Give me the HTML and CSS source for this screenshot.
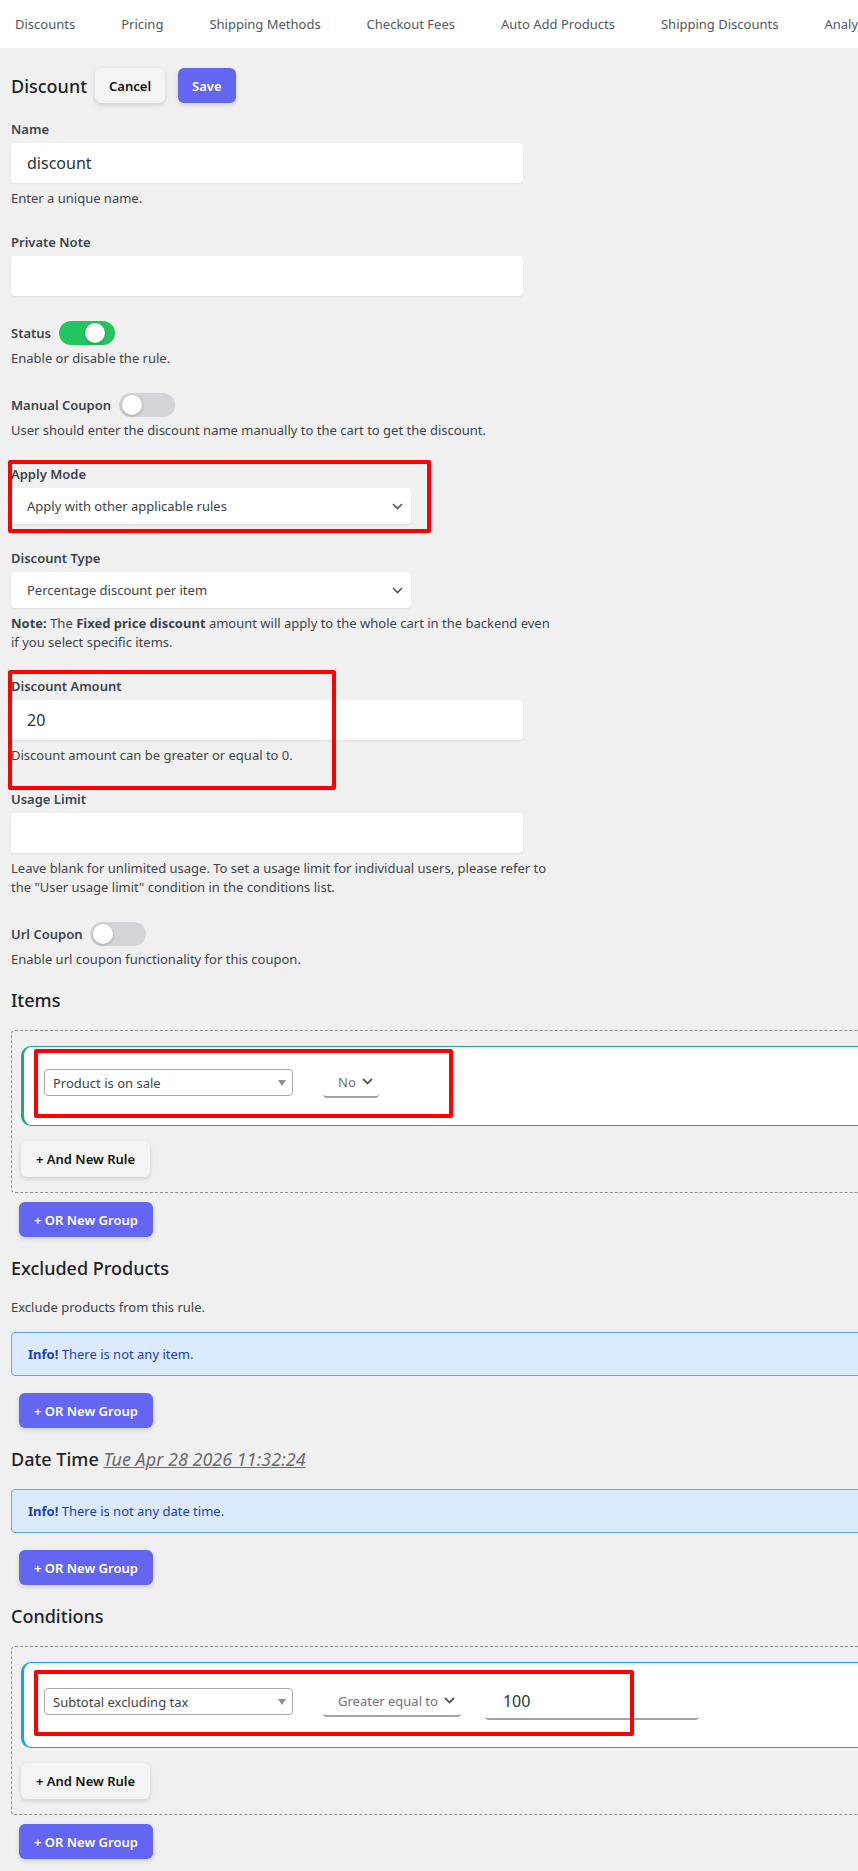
FILE: index.html
```html
<!DOCTYPE html>
<html lang="en">
<head>
    <meta charset="UTF-8">
    <meta name="viewport" content="width=device-width, initial-scale=1.0">
    <title>Discount rule</title>
    <link rel="stylesheet" href="styles.css">
</head>
<body>
    <nav class="tabs">
        <a class="tab">Discounts</a>
        <a class="tab">Pricing</a>
        <a class="tab">Shipping Methods</a>
        <a class="tab">Checkout Fees</a>
        <a class="tab">Auto Add Products</a>
        <a class="tab">Shipping Discounts</a>
        <a class="tab">Analytics</a>
    </nav>

    <div class="page">
        <div class="title-row">
            <h1 class="title">Discount</h1>
            <button class="btn btn-light">Cancel</button>
            <button class="btn btn-primary">Save</button>
        </div>

        <div class="field">
            <label class="label">Name</label>
            <input class="input" type="text" value="discount">
            <div class="help">Enter a unique name.</div>
        </div>

        <div class="field">
            <label class="label">Private Note</label>
            <input class="input" type="text" value="">
        </div>

        <div class="field">
            <div class="switch-row">
                <span class="label inline">Status</span>
                <span class="switch on"><span class="knob"></span></span>
            </div>
            <div class="help tight">Enable or disable the rule.</div>
        </div>

        <div class="field">
            <div class="switch-row">
                <span class="label inline">Manual Coupon</span>
                <span class="switch"><span class="knob"></span></span>
            </div>
            <div class="help tight">User should enter the discount name manually to the cart to get the discount.</div>
        </div>

        <div class="field">
            <label class="label">Apply Mode</label>
            <div class="select">
                <span>Apply with other applicable rules</span>
                <svg width="11" height="7" viewBox="0 0 11 7"><polyline points="1,1 5.5,5.5 10,1" fill="none" stroke="#50575e" stroke-width="1.6"/></svg>
            </div>
            <span class="mark mark-apply"></span>
        </div>

        <div class="field">
            <label class="label">Discount Type</label>
            <div class="select">
                <span>Percentage discount per item</span>
                <svg width="11" height="7" viewBox="0 0 11 7"><polyline points="1,1 5.5,5.5 10,1" fill="none" stroke="#50575e" stroke-width="1.6"/></svg>
            </div>
            <p class="note"><b>Note:</b> The <b>Fixed price discount</b> amount will apply to the whole cart in the backend even if you select specific items.</p>
        </div>

        <div class="field">
            <label class="label">Discount Amount</label>
            <input class="input" type="text" value="20">
            <div class="help">Discount amount can be greater or equal to 0.</div>
            <span class="mark mark-amount"></span>
        </div>

        <div class="field">
            <label class="label">Usage Limit</label>
            <input class="input" type="text" value="">
            <div class="help">Leave blank for unlimited usage. To set a usage limit for individual users, please refer to the "User usage limit" condition in the conditions list.</div>
        </div>

        <div class="field">
            <div class="switch-row">
                <span class="label inline">Url Coupon</span>
                <span class="switch"><span class="knob"></span></span>
            </div>
            <div class="help tight">Enable url coupon functionality for this coupon.</div>
        </div>

        <!-- items -->
        <h2 class="section-title">Items</h2>
        <div class="group">
            <div class="rule rule-green">
                <div class="rule-row">
                    <div class="type-select">
                        <span>Product is on sale</span>
                        <span class="caret"></span>
                    </div>
                    <div class="mini-select">
                        <span>No</span>
                        <svg width="11" height="7" viewBox="0 0 11 7"><polyline points="1,1 5.5,5.5 10,1" fill="none" stroke="#50575e" stroke-width="1.8"/></svg>
                    </div>
                </div>
                <span class="mark mark-items"></span>
            </div>
            <button class="btn btn-light btn-rule">+ And New Rule</button>
        </div>
        <button class="btn btn-primary btn-group">+ OR New Group</button>

        <!-- excluded products -->
        <h2 class="section-title">Excluded Products</h2>
        <p class="desc">Exclude products from this rule.</p>
        <div class="info"><b>Info!</b> There is not any item.</div>
        <button class="btn btn-primary btn-group">+ OR New Group</button>

        <!-- date time -->
        <h2 class="section-title">Date Time <span class="date">Tue Apr 28 2026 11:32:24</span></h2>
        <div class="info"><b>Info!</b> There is not any date time.</div>
        <button class="btn btn-primary btn-group">+ OR New Group</button>

        <!-- conditions -->
        <h2 class="section-title">Conditions</h2>
        <div class="group">
            <div class="rule rule-blue">
                <div class="rule-row">
                    <div class="type-select">
                        <span>Subtotal excluding tax</span>
                        <span class="caret"></span>
                    </div>
                    <div class="mini-select wide">
                        <span>Greater equal to</span>
                        <svg width="11" height="7" viewBox="0 0 11 7"><polyline points="1,1 5.5,5.5 10,1" fill="none" stroke="#50575e" stroke-width="1.8"/></svg>
                    </div>
                    <input class="line-input" type="text" value="100">
                </div>
                <span class="mark mark-conditions"></span>
            </div>
            <button class="btn btn-light btn-rule">+ And New Rule</button>
        </div>
        <button class="btn btn-primary btn-group">+ OR New Group</button>
    </div>
</body>
</html>
```

FILE: styles.css
```css
html, body {
    overflow-x: hidden;
}
body {
    margin: 0;
    background: #f0f0f1;
    font-family: "Noto Sans", "Open Sans", sans-serif;
    font-size: 13px;
    color: #3c434a;
}

/* top tabs */
.tabs {
    display: flex;
    gap: 46px;
    height: 48px;
    align-items: center;
    padding-left: 15px;
    background: #fff;
    white-space: nowrap;
    font-size: 13px;
    color: #50575e;
}
.tab {
    cursor: pointer;
}

.page {
    width: 1200px;
    padding: 20px 11px 30px;
}

.title-row {
    display: flex;
    align-items: center;
    height: 35px;
    margin-bottom: 17px;
}
.title {
    margin: 0 8px 0 0;
    font-size: 18px;
    font-weight: 500;
    color: #1d2327;
}

/* buttons */
.btn {
    height: 35px;
    padding: 0 14px;
    border: none;
    border-radius: 6px;
    font-family: inherit;
    font-size: 13px;
    font-weight: 600;
    cursor: pointer;
    box-shadow: 0 2px 5px rgba(0,0,0,0.14);
}
.btn-light {
    background: #f4f4f5;
    color: #111;
}
.btn-primary {
    background: #6366f1;
    color: #fff;
}
.title-row .btn-light {
    margin-right: 13px;
}
.btn-rule {
    height: 36px;
    margin-top: 15px;
    padding: 0 15px;
}
.btn-group {
    display: block;
    margin: 9px 0 19px 8px;
    padding: 0 15px;
}

/* form fields */
.field {
    position: relative;
    margin-bottom: 25px;
}
.label {
    display: block;
    margin-bottom: 5px;
    line-height: 18px;
    font-weight: 600;
    color: #3c434a;
}
.label.inline {
    display: inline;
    margin: 0;
}
.input {
    display: block;
    width: 512px;
    height: 40px;
    box-sizing: border-box;
    padding: 0 16px;
    border: none;
    border-radius: 4px;
    background: #fff;
    box-shadow: 0 1px 2px rgba(0,0,0,0.07);
    font-family: inherit;
    font-size: 16px;
    color: #2c3338;
    outline: none;
}
.help {
    width: 540px;
    margin-top: 6px;
    line-height: 19px;
}
.help.tight {
    margin-top: 4px;
}
.note {
    width: 544px;
    margin: 6px 0 0;
    line-height: 19px;
    color: #3c434a;
}

.select {
    display: flex;
    align-items: center;
    justify-content: space-between;
    width: 400px;
    height: 36px;
    box-sizing: border-box;
    padding: 0 8px 0 16px;
    border-radius: 4px;
    background: #fff;
    box-shadow: 0 1px 2px rgba(0,0,0,0.07);
}

/* switches */
.switch-row {
    display: flex;
    align-items: center;
    gap: 8px;
    height: 24px;
}
.switch {
    position: relative;
    width: 56px;
    height: 24px;
    border-radius: 12px;
    background: #d4d4d8;
}
.switch.on {
    background: #22c55e;
}
.knob {
    position: absolute;
    top: 2px;
    left: 3px;
    width: 20px;
    height: 20px;
    border-radius: 50%;
    background: #fff;
    box-shadow: 0 1px 3px rgba(0,0,0,0.25);
}
.switch.on .knob {
    left: auto;
    right: 10px;
}

/* sections */
.section-title {
    margin: 0 0 18px;
    font-size: 18px;
    line-height: 24px;
    font-weight: 500;
    color: #1d2327;
}
.field + .section-title {
    margin-top: -6px;
}
.date {
    font-style: italic;
    font-weight: 400;
    text-decoration: underline;
    color: #6b6b6b;
}
.desc {
    margin: 0 0 15px;
    line-height: 19px;
}
.info {
    height: 44px;
    box-sizing: border-box;
    padding: 12px 16px;
    line-height: 18px;
    border: 1px solid #60a5fa;
    border-radius: 4px;
    background: #dbeafe;
    color: #1e40af;
}
.info + .btn-group {
    margin-top: 17px;
}

/* rule groups */
.group {
    padding: 15px 10px 15px 9px;
    border: 1px dashed #8c8f94;
    border-radius: 4px;
}
.rule {
    position: relative;
    padding: 20px 20px 27px;
    border: 1px solid;
    border-left-width: 3px;
    border-radius: 10px 0 0 10px;
    background: #fff;
}
.rule-green {
    border-color: #1fa68a;
}
.rule-blue {
    border-color: #0ea5e9;
}
.rule-row {
    display: flex;
    align-items: center;
    min-height: 31px;
}
.type-select {
    display: flex;
    align-items: center;
    justify-content: space-between;
    width: 249px;
    height: 27px;
    box-sizing: border-box;
    padding: 0 6px 0 8px;
    border: 1px solid #a7aaad;
    border-radius: 4px;
    color: #3c434a;
}
.caret {
    width: 0;
    height: 0;
    border-left: 4px solid transparent;
    border-right: 4px solid transparent;
    border-top: 6px solid #8c8f94;
}
.mini-select {
    display: flex;
    align-items: center;
    gap: 6px;
    height: 29px;
    margin-left: 30px;
    padding: 0 6px 0 15px;
    border-bottom: 2px solid #a1a1aa;
    border-radius: 4px;
    color: #71717a;
}
.line-input {
    width: 214px;
    height: 37px;
    box-sizing: border-box;
    margin-left: 24px;
    padding: 0 18px;
    border: none;
    border-bottom: 2px solid #a1a1aa;
    border-radius: 4px;
    font-family: inherit;
    font-size: 16px;
    color: #2c3338;
    outline: none;
}

/* red highlight frames */
.mark {
    position: absolute;
    border: 4px solid #ff0000;
    border-radius: 2px;
    pointer-events: none;
}
.mark-apply {
    left: -3px;
    top: -5px;
    width: 415px;
    height: 65px;
}
.mark-amount {
    left: -3px;
    top: -7px;
    width: 320px;
    height: 112px;
}
.mark-items {
    left: 10px;
    top: 2px;
    width: 411px;
    height: 61px;
}
.mark-conditions {
    left: 10px;
    top: 7px;
    width: 592px;
    height: 58px;
}
```
